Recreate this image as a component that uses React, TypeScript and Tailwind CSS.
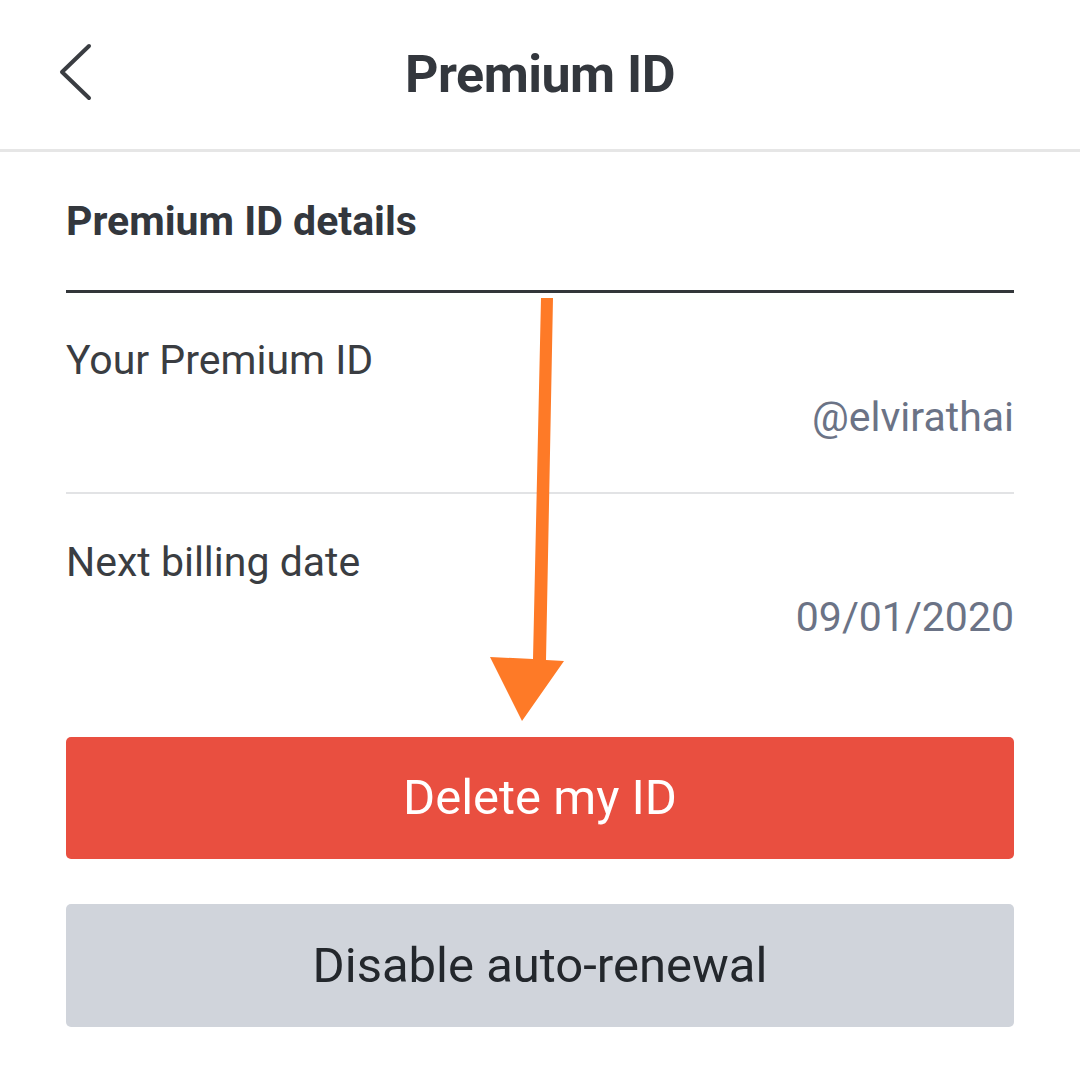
const font = { fontFamily: 'Roboto, "Noto Sans", sans-serif' };

function DetailRow({ label, value, last = false }: { label: string; value: string; last?: boolean }) {
  return (
    <div className={last ? 'pt-[44px]' : 'pt-[43px] pb-[51px] border-b-2 border-[#e2e3e5]'}>
      <div className="text-[41px] leading-[48px] text-[#3a3d42]">{label}</div>
      <div className={`text-right text-[41px] leading-[48px] text-[#6b7386] ${last ? 'mt-[7px]' : 'mt-[9px]'}`}>{value}</div>
    </div>
  );
}

export default function App() {
  return (
    <div className="relative w-[1080px] h-[1070px] bg-white overflow-hidden" style={font}>
      <header className="relative h-[152px] flex items-center justify-center border-b-[3px] border-[#e6e6e6]">
        <button type="button" className="absolute left-[56px] top-[42px] text-[#3a3d42]">
          <svg width="40" height="60" viewBox="0 0 40 60" fill="none" stroke="currentColor" strokeWidth="4" strokeLinecap="round" strokeLinejoin="round">
            <polyline points="33,4 6,30 33,56" />
          </svg>
        </button>
        <h1 className="text-[52px] font-bold text-[#33373d] tracking-[-0.5px]">Premium ID</h1>
      </header>

      <div className="px-[66px]">
        <div className="h-[141px] flex items-start pt-[45px] border-b-[3px] border-[#33363a]">
          <h2 className="text-[41px] font-bold text-[#33373d] leading-[48px]">Premium ID details</h2>
        </div>

        <DetailRow label="Your Premium ID" value="@elvirathai" />
        <DetailRow label="Next billing date" value="09/01/2020" last />

        <div className="flex flex-col gap-[45px] mt-[96px]">
          <button type="button" className="h-[122px] w-full rounded-[5px] bg-[#e94f40] text-white text-[49px]">
            Delete my ID
          </button>
          <button type="button" className="h-[123px] w-full rounded-[5px] bg-[#d0d4db] text-[#23272c] text-[49px]">
            Disable auto-renewal
          </button>
        </div>
      </div>

      {/* orange annotation arrow */}
      <svg className="absolute left-0 top-0 pointer-events-none" width="1080" height="1070" viewBox="0 0 1080 1070">
        <polygon points="541,298 553,298 546,660 564,661 522,721 490,657 533,659" fill="#fe7a27" />
      </svg>
    </div>
  );
}
